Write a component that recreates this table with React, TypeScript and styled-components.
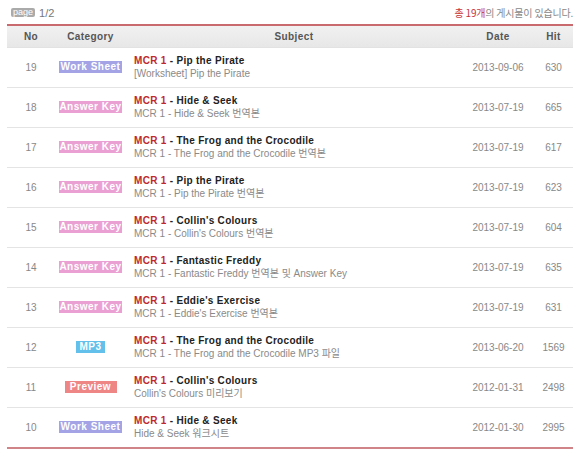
import React from "react";
import styled, { createGlobalStyle } from "styled-components";

const Global = createGlobalStyle`
  html, body { margin: 0; padding: 0; background: #fff; }
  body { font-family: "Liberation Sans", "Noto Sans CJK KR", Arial, sans-serif; }
`;

const Page = styled.div`
  width: 566px;
  padding: 0 7px;
`;

const TopBar = styled.div`
  display: flex;
  align-items: center;
  justify-content: space-between;
  height: 24px;
  padding: 1px 0 0 4px;
  box-sizing: border-box;
`;

const PageInfo = styled.div`
  display: flex;
  align-items: center;
  gap: 4px;
  font-size: 11px;
  color: #777;
`;

const PageTag = styled.span`
  display: inline-block;
  background: #aaa;
  color: #fff;
  font-size: 9px;
  line-height: 9px;
  height: 9px;
  padding: 0 2px;
  border-radius: 2px;
`;

const Total = styled.div`
  font-size: 10px;
  color: #888;
  font-family: "Noto Sans CJK KR", "Liberation Sans", sans-serif;
  letter-spacing: -0.2px;
`;

const Red = styled.span`
  color: #c8343a;
`;

const Table = styled.div`
  border-top: 2px solid #c86a6e;
  border-bottom: 2px solid #d08488;
`;

const cols = "48px 71px 1fr 72px 39px";

const HeadRow = styled.div`
  display: grid;
  grid-template-columns: ${cols};
  height: 21px;
  align-items: center;
  background: linear-gradient(#f1f1f1, #e7e7e7);
  border-bottom: 1px solid #e2e2e2;
`;

const HeadCell = styled.div`
  text-align: center;
  font-size: 10px;
  font-weight: bold;
  color: #555;
  letter-spacing: 0.4px;
`;

const Row = styled.div<{ $last?: boolean }>`
  display: grid;
  grid-template-columns: ${cols};
  height: 39px;
  align-items: center;
  border-bottom: ${(p) => (p.$last ? "none" : "1px solid #e4e4e4")};
`;

const Cell = styled.div`
  text-align: center;
  font-size: 10px;
  color: #888;
`;

const Badge = styled.span<{ $bg: string; $w: number }>`
  display: inline-block;
  width: ${(p) => p.$w}px;
  height: 12px;
  line-height: 12px;
  background: ${(p) => p.$bg};
  color: #fff;
  font-size: 10px;
  font-weight: bold;
  letter-spacing: 0.5px;
  text-align: center;
  white-space: nowrap;
  overflow: hidden;
`;

const Subject = styled.div`
  padding-left: 8px;
  display: flex;
  flex-direction: column;
  gap: 1px;
`;

const Title = styled.div`
  font-size: 10px;
  font-weight: bold;
  color: #222;
  line-height: 12px;
  letter-spacing: 0.3px;
  white-space: nowrap;
`;

const Code = styled.span`
  color: #c0282d;
`;

const Sub = styled.div`
  font-size: 10px;
  color: #8a8a8a;
  line-height: 12px;
  white-space: nowrap;
  font-family: "Liberation Sans", "Noto Sans CJK KR", sans-serif;
`;

type Cat = "ws" | "ak" | "mp3" | "pv";
const cats: Record<Cat, { label: string; bg: string; w: number }> = {
  ws: { label: "Work Sheet", bg: "#a3a3e6", w: 63 },
  ak: { label: "Answer Key", bg: "#eaa0d2", w: 63 },
  mp3: { label: "MP3", bg: "#62c0ea", w: 29 },
  pv: { label: "Preview", bg: "#ee8686", w: 52 },
};

const rows: { no: number; cat: Cat; title: string; sub: string; date: string; hit: number }[] = [
  { no: 19, cat: "ws", title: "Pip the Pirate", sub: "[Worksheet] Pip the Pirate", date: "2013-09-06", hit: 630 },
  { no: 18, cat: "ak", title: "Hide & Seek", sub: "MCR 1 - Hide & Seek 번역본", date: "2013-07-19", hit: 665 },
  { no: 17, cat: "ak", title: "The Frog and the Crocodile", sub: "MCR 1 - The Frog and the Crocodile 번역본", date: "2013-07-19", hit: 617 },
  { no: 16, cat: "ak", title: "Pip the Pirate", sub: "MCR 1 - Pip the Pirate 번역본", date: "2013-07-19", hit: 623 },
  { no: 15, cat: "ak", title: "Collin's Colours", sub: "MCR 1 - Collin's Colours 번역본", date: "2013-07-19", hit: 604 },
  { no: 14, cat: "ak", title: "Fantastic Freddy", sub: "MCR 1 - Fantastic Freddy 번역본 및 Answer Key", date: "2013-07-19", hit: 635 },
  { no: 13, cat: "ak", title: "Eddie's Exercise", sub: "MCR 1 - Eddie's Exercise 번역본", date: "2013-07-19", hit: 631 },
  { no: 12, cat: "mp3", title: "The Frog and the Crocodile", sub: "MCR 1 - The Frog and the Crocodile MP3 파일", date: "2013-06-20", hit: 1569 },
  { no: 11, cat: "pv", title: "Collin's Colours", sub: "Collin's Colours 미리보기", date: "2012-01-31", hit: 2498 },
  { no: 10, cat: "ws", title: "Hide & Seek", sub: "Hide & Seek 워크시트", date: "2012-01-30", hit: 2995 },
];

export default function App() {
  return (
    <Page>
      <Global />
      <TopBar>
        <PageInfo>
          <PageTag>page</PageTag>
          <span>1/2</span>
        </PageInfo>
        <Total>
          <Red>총 19개</Red>의 게시물이 있습니다.
        </Total>
      </TopBar>
      <Table>
        <HeadRow>
          <HeadCell>No</HeadCell>
          <HeadCell>Category</HeadCell>
          <HeadCell>Subject</HeadCell>
          <HeadCell>Date</HeadCell>
          <HeadCell>Hit</HeadCell>
        </HeadRow>
        {rows.map((r, i) => {
          const c = cats[r.cat];
          return (
            <Row key={r.no} $last={i === rows.length - 1}>
              <Cell>{r.no}</Cell>
              <Cell>
                <Badge $bg={c.bg} $w={c.w}>{c.label}</Badge>
              </Cell>
              <Subject>
                <Title>
                  <Code>MCR 1</Code> - {r.title}
                </Title>
                <Sub>{r.sub}</Sub>
              </Subject>
              <Cell>{r.date}</Cell>
              <Cell>{r.hit}</Cell>
            </Row>
          );
        })}
      </Table>
    </Page>
  );
}
